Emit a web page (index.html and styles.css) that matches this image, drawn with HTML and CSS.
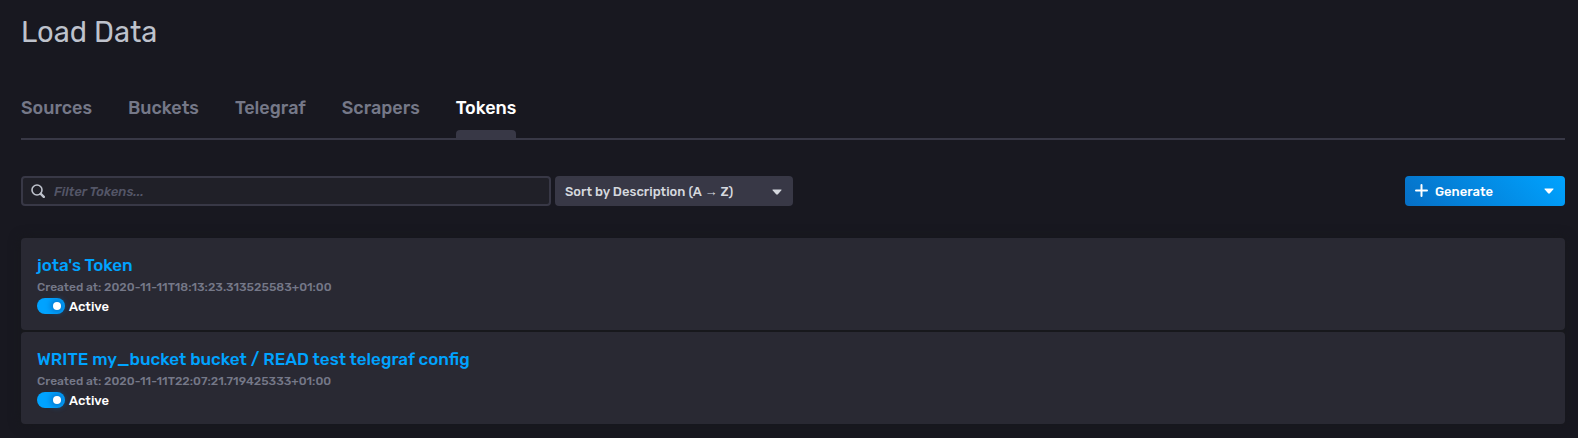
FILE: index.html
```html
<!DOCTYPE html>
<html lang="en">
<head>
  <meta charset="UTF-8">
  <meta name="viewport" content="width=device-width, initial-scale=1.0">
  <title>Load Data - Tokens</title>
  <link rel="stylesheet" href="styles.css">
</head>
<body>
  <header class="page-header">
    <h1>Load Data</h1>
  </header>

  <nav class="tabs">
    <a href="#">Sources</a>
    <a href="#">Buckets</a>
    <a href="#">Telegraf</a>
    <a href="#">Scrapers</a>
    <a href="#" class="active" aria-current="page">Tokens</a>
  </nav>

  <main>
    <div class="toolbar">
      <label class="search">
        <svg width="14" height="14" viewBox="0 0 14 14" aria-hidden="true">
          <circle cx="6" cy="6" r="5" fill="none" stroke="currentColor" stroke-width="1.6"/>
          <path d="M9.8 9.8l3 3" stroke="currentColor" stroke-width="2.4" stroke-linecap="round"/>
        </svg>
        <input type="text" placeholder="Filter Tokens..." aria-label="Filter Tokens">
      </label>

      <div class="sort">
        <select aria-label="Sort tokens">
          <option>Sort by Description (A → Z)</option>
          <option>Sort by Description (Z → A)</option>
          <option>Sort by Status (Active)</option>
          <option>Sort by Status (Inactive)</option>
        </select>
        <svg class="caret" width="10" height="6" viewBox="0 0 10 6" aria-hidden="true">
          <path d="M1 .5h8q1 0 .4.8L5.9 5.2q-.9.9-1.8 0L.6 1.3Q0 .5 1 .5z" fill="currentColor"/>
        </svg>
      </div>

      <button type="button" class="generate">
        <svg width="14" height="14" viewBox="0 0 14 14" aria-hidden="true">
          <path d="M6.5 1v11M1 6.5h11" stroke="currentColor" stroke-width="2" stroke-linecap="round"/>
        </svg>
        <span>Generate</span>
        <svg class="caret" width="10" height="6" viewBox="0 0 10 6" aria-hidden="true">
          <path d="M1 .5h8q1 0 .4.8L5.9 5.2q-.9.9-1.8 0L.6 1.3Q0 .5 1 .5z" fill="currentColor"/>
        </svg>
      </button>
    </div>

    <div class="token-list">
      <article class="card">
        <h2><a href="#">jota's Token</a></h2>
        <p>Created at: 2020-11-11T18:13:23.313525583+01:00</p>
        <label class="toggle">
          <input type="checkbox" checked>
          <span>Active</span>
        </label>
      </article>
      <article class="card">
        <h2><a href="#">WRITE my_bucket bucket / READ test telegraf config</a></h2>
        <p>Created at: 2020-11-11T22:07:21.719425333+01:00</p>
        <label class="toggle">
          <input type="checkbox" checked>
          <span>Active</span>
        </label>
      </article>
    </div>
  </main>
</body>
</html>
```

FILE: styles.css
```css
* {
  box-sizing: border-box;
}

body {
  font-family: Rubik, "Liberation Sans", sans-serif;
  font-size: 13px;
  font-weight: 500;
  margin: 0;
  padding: 16px 13px 14px 21px;
  background-color: #181820;
  color: #d4d7dd;
}

h1, h2, p {
  margin: 0;
}

a {
  text-decoration: none;
}

h1 {
  font-size: 29px;
  font-weight: 400;
  line-height: 32px;
  color: #bec2cc;
}

.tabs {
  display: flex;
  gap: 36px;
  margin-top: 36px;
  border-bottom: 2px solid #383846;
}

.tabs a {
  position: relative;
  font-size: 18px;
  line-height: 48px;
  padding-bottom: 6px;
  color: #757888;
}

.tabs a:hover,
.tabs .active {
  color: #fff;
}

.tabs .active::after {
  content: "";
  position: absolute;
  left: 0;
  right: 0;
  bottom: 0;
  height: 8px;
  border-radius: 4px 4px 0 0;
  background-color: #383846;
}

.toolbar {
  display: flex;
  gap: 4px;
  margin-top: 36px;
}

.search {
  display: flex;
  align-items: center;
  gap: 9px;
  width: 530px;
  height: 30px;
  padding: 0 8px;
  border: 2px solid #383846;
  border-radius: 4px;
  background-color: #202028;
  color: #bec2cc;
}

.search input {
  flex: 1;
  min-width: 0;
  padding: 0;
  border: 0;
  outline: 0;
  background: none;
  font: inherit;
  color: inherit;
}

.search input::placeholder {
  font-style: italic;
  color: #545667;
}

.sort {
  position: relative;
  width: 238px;
}

.sort select {
  appearance: none;
  width: 100%;
  height: 30px;
  padding: 0 28px 0 10px;
  border: 0;
  border-radius: 4px;
  background-color: #383846;
  font: inherit;
  color: #d4d7dd;
}

.sort .caret {
  position: absolute;
  top: 13px;
  right: 11px;
  pointer-events: none;
}

.generate {
  display: flex;
  align-items: center;
  gap: 6px;
  width: 160px;
  height: 30px;
  margin-left: auto;
  padding: 0 11px 0 10px;
  border: 0;
  border-radius: 4px;
  background: linear-gradient(45deg, #066fc5, #00a3ff);
  font: inherit;
  color: #fff;
  cursor: pointer;
}

.generate .caret {
  margin-left: auto;
}

.token-list {
  display: flex;
  flex-direction: column;
  gap: 2px;
  margin-top: 32px;
  border-radius: 4px;
  background-color: #17181c;
  box-shadow: 0 0 12px #17181c;
}

.card {
  padding: 15px 16px 16px;
  border-radius: 4px;
  background-color: #292933;
}

.card h2 {
  font-size: 17px;
  font-weight: 500;
  line-height: 24px;
}

.card h2 a {
  color: #00a3ff;
}

.card p {
  font-size: 12px;
  line-height: 20px;
  color: #757888;
}

.toggle {
  display: flex;
  align-items: center;
  gap: 4px;
  width: max-content;
  margin-top: 1px;
  color: #fff;
}

.toggle span {
  line-height: 14px;
  padding-top: 2px;
}

.toggle input {
  appearance: none;
  display: flex;
  align-items: center;
  width: 28px;
  height: 16px;
  margin: 0;
  padding: 0 4px;
  border-radius: 8px;
  background-color: #383846;
}

.toggle input::before {
  content: "";
  width: 8px;
  height: 8px;
  border-radius: 50%;
  background-color: #fff;
}

.toggle input:checked {
  justify-content: flex-end;
  background-color: #00a3ff;
}

.toggle input:checked::before {
  box-shadow: 0 0 6px 2px #066fc5;
}
```
